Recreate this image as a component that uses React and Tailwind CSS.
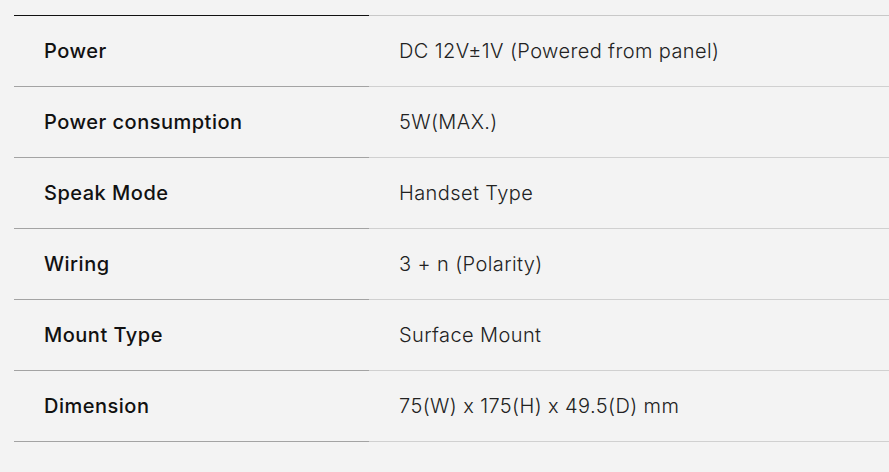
import React from 'react';

const specs = [
  { label: 'Power', value: 'DC 12V±1V (Powered from panel)' },
  { label: 'Power consumption', value: '5W(MAX.)' },
  { label: 'Speak Mode', value: 'Handset Type' },
  { label: 'Wiring', value: '3 + n (Polarity)' },
  { label: 'Mount Type', value: 'Surface Mount' },
  { label: 'Dimension', value: '75(W) x 175(H) x 49.5(D) mm' },
];

const App = () => {
  return (
    <div className="min-h-screen w-full bg-[#f3f3f3] pt-[15px] pl-[14px] font-['Inter','Open_Sans',sans-serif] overflow-hidden">
      <div className="grid grid-cols-[355px_1fr]">
        <div className="h-px bg-[#111]" />
        <div className="h-px bg-[#c8c8c8]" />
        {specs.map((row) => (
          <React.Fragment key={row.label}>
            <div className="h-[71px] flex items-center pl-[30px] border-b border-[#a3a3a3] text-[20px] font-medium text-[#111] tracking-[0.5px]">
              {row.label}
            </div>
            <div className="h-[71px] flex items-center pl-[30px] border-b border-[#d0d0d0] text-[20px] font-light text-[#222] tracking-[0.4px]">
              {row.value}
            </div>
          </React.Fragment>
        ))}
      </div>
    </div>
  );
};

export default App;
